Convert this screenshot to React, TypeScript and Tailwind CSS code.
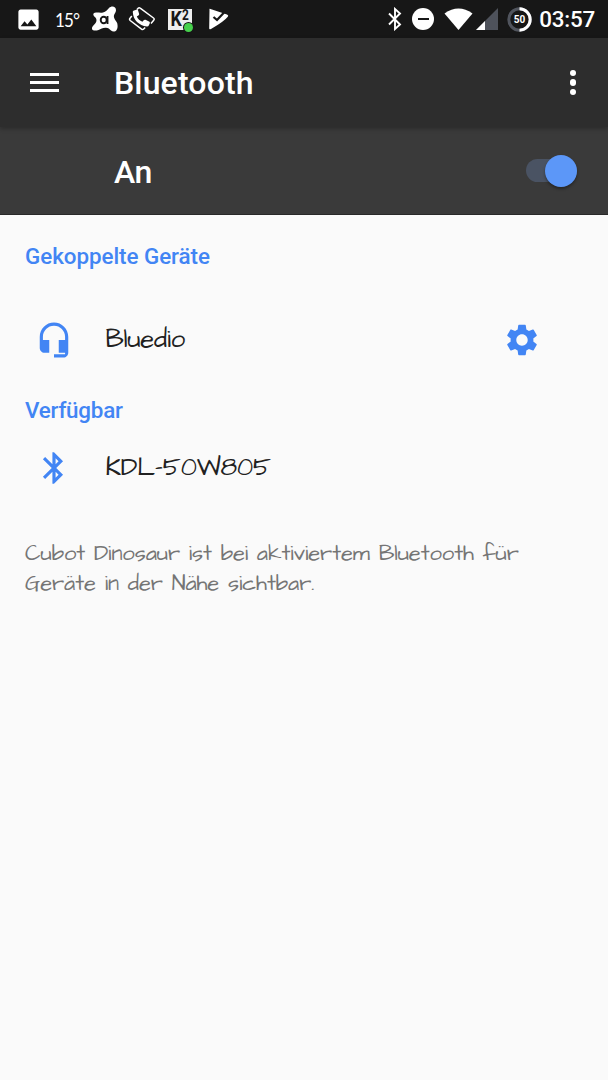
import type { ReactNode } from 'react';
import { MdBluetooth, MdImage, MdSettings } from 'react-icons/md';

interface SectionProps {
    title: string;
    className?: string;
}

interface DeviceProps {
    name: string;
    icon: ReactNode;
    action?: ReactNode;
    className?: string;
}

function AvastIcon() {
    return (
        <svg className="h-[27px] w-[27px]" viewBox="0 0 27 27">
            <path
                fill="#fff"
                d="M5 6.500c3 0 5 .5 7 0 3-.8 4-2.500 6-4.500 2-2 4.500-2 6-.5 1.500 1.700 1.200 4-.2 6-1 1.500-1.200 3-.5 4.700.7 2 2.600 3.400 3 5.300.5 2.800.5 4.500-.7 6.500-1.300 2-4 2-5.600.5-1.600-1.600-2.700-2.500-5-2.700-3-.3-5 1.300-7.500 2.200-2.800 1-6 .8-6.500-1-.5-2 1.500-3.500 3-5.200 1.500-1.800 1.800-3.300 1.200-5C4.500 10.800 2.500 10.500 2.300 8.700 2.200 7.200 3.500 6.500 5 6.500z"
            />
            <ellipse cx="12.700" cy="14" rx="3" ry="3.300" fill="none" stroke="#171717" strokeWidth="1.900" />
            <path d="M16.500 10v8" fill="none" stroke="#171717" strokeWidth="1.900" />
        </svg>
    );
}

function RotatePhoneIcon() {
    return (
        <svg className="h-[26px] w-[28px]" viewBox="0 0 28 26" fill="none">
            <path d="M9 3.500 10.200 2.200q1-.8 2 0L25.500 12q1.300 1 .2 2.200L23 17.500" stroke="#fff" strokeWidth="1.500" />
            <path d="M3.800 10 2 12.300q-1 1.200.2 2.200l11.300 8.700q1.200.8 2.200-.2l1.500-1.500" stroke="#fff" strokeWidth="1.500" />
            <path
                fill="#fff"
                d="M6 4.500 8.300 3.700c.9-.3 1.500.1 1.800.9l1 3.200c.2.800-.1 1.400-.8 1.800L8.800 10.600c1.100 2.400 3 4.200 5.600 5.200l1.300-1.600c.5-.6 1.100-.7 1.800-.4l3.500 1.600c.8.4 1 1 .8 1.800l-.9 2c-.4.900-1.100 1.300-2.100 1.200C11 19.500 5.200 14 4.800 6.200c0-.9.300-1.400 1.200-1.700z"
            />
        </svg>
    );
}

function PlayCheckIcon() {
    return (
        <svg className="h-[22px] w-[21px]" viewBox="0 0 21 22">
            <path fill="#fff" d="M1.500 1.500Q1 .5 2.500 1L19 6.500q2 .8.800 2.200-4 5-16.800 12.200Q1 22 1.200 20z" />
            <path d="m5.500 9 3.500 3 8-8.500" fill="none" stroke="#171717" strokeWidth="2.200" />
        </svg>
    );
}

function StatusBar() {
    return (
        <div className="flex h-[38px] items-center bg-[#171717] text-white">
            <MdImage className="ml-[15px] size-[27px] shrink-0" />
            <span className="ml-[13px] w-[26px] origin-left scale-x-[0.85] font-['Lato'] text-[20px] tracking-[-1px]">15°</span>
            <div className="ml-[10px]"><AvastIcon /></div>
            <div className="ml-[10px]"><RotatePhoneIcon /></div>
            <div className="relative ml-[12px] flex h-[21px] w-[24px] items-center justify-center bg-[#eee] font-['Roboto'] leading-none font-bold text-[#171717]">
                <span className="flex scale-x-[0.85] text-[21px] leading-none">
                    K<span className="-mt-px text-[14px] leading-none">2</span>
                </span>
                <span className="absolute -right-[1px] -bottom-[2px] size-[9px] rounded-full bg-[#46d14c] ring-1 ring-[#171717]" />
            </div>
            <div className="ml-[16px]"><PlayCheckIcon /></div>

            <div className="ml-auto flex items-center pr-[13px]">
                <svg className="h-[24px] w-[16px]" viewBox="0 0 16 24">
                    <path d="m2 6.500 11 11-5 4.500V2l5 4.500-11 11" fill="none" stroke="#fff" strokeWidth="1.900" />
                </svg>
                <div className="ml-[9px] flex size-[22px] items-center justify-center rounded-full bg-white">
                    <span className="h-[2px] w-[11px] bg-[#171717]" />
                </div>
                <svg className="ml-[10px] h-[22px] w-[29px]" viewBox="0 0 29 22">
                    <path fill="#fff" d="M.5 5.500Q14.500-4.500 28.500 5.500L14.500 22z" />
                </svg>
                <svg className="ml-[3px] h-[22px] w-[22px]" viewBox="0 0 22 22">
                    <path fill="#4e525b" d="M22 0v22H0z" />
                    <path fill="#fff" d="M9 13v9H0z" />
                </svg>
                <svg className="ml-[9px] size-[25px]" viewBox="0 0 25 25">
                    <circle cx="12.500" cy="12.500" r="10.700" fill="none" stroke="#50545d" strokeWidth="3" />
                    <path d="M12.500 1.800a10.700 10.700 0 0 1 0 21.400" fill="none" stroke="#fff" strokeWidth="3" />
                    <text x="12.500" y="16.200" textAnchor="middle" fill="#fff" fontFamily="Roboto" fontSize="10" fontWeight="700">50</text>
                </svg>
                <span className="ml-[7px] font-['Roboto'] text-[22.400px] leading-none font-medium tracking-[-0.200px]">03:57</span>
            </div>
        </div>
    );
}

function Toolbar() {
    return (
        <header className="relative flex h-[89px] items-center bg-[#2d2d2d] pr-[32px] pl-[30px] text-white shadow-[0_2px_4px_rgba(0,0,0,0.25)]">
            <div className="flex w-[29px] flex-col gap-[5px]">
                <span className="h-[3px] bg-white" />
                <span className="h-[3px] bg-white" />
                <span className="h-[3px] bg-white" />
            </div>
            <h1 className="ml-[55px] text-[32px] leading-none font-medium tracking-[0.150px]">Bluetooth</h1>
            <div className="ml-auto flex flex-col gap-[3px]">
                <span className="size-[6.500px] rounded-full bg-white" />
                <span className="size-[6.500px] rounded-full bg-white" />
                <span className="size-[6.500px] rounded-full bg-white" />
            </div>
        </header>
    );
}

function SwitchBar() {
    return (
        <div className="flex h-[88px] items-center justify-between border-b border-[#292929] bg-[#3a3a3a] pr-[31px] pl-[114px] text-white">
            <span className="pt-[2px] text-[32px] leading-none font-medium tracking-[-0.500px]">An</span>
            <div className="flex h-[23px] w-[51px] items-center justify-end rounded-full bg-[#4a5363]">
                <span className="size-[32px] rounded-full bg-[#5c97f8] shadow-[0_2px_3px_rgba(0,0,0,0.35)]" />
            </div>
        </div>
    );
}

function SectionTitle({ title, className = '' }: SectionProps) {
    return <h2 className={`text-[22.400px] leading-[26px] font-medium text-[#4285f4] ${className}`}>{title}</h2>;
}

function Device({ name, icon, action, className = '' }: DeviceProps) {
    return (
        <div className={`flex h-[38px] items-center pr-[42px] pl-[10px] text-[#4285f4] ${className}`}>
            {icon}
            <span className="ml-[32.500px] font-['Architects_Daughter','Lato',sans-serif] text-[25.600px] tracking-[-0.150px] text-[#212121]">{name}</span>
            {action && <div className="ml-auto">{action}</div>}
        </div>
    );
}

export default function App() {
    return (
        <div className="flex h-[1080px] w-[608px] flex-col overflow-hidden bg-[#fafafa] font-['Roboto',sans-serif]">
            <StatusBar />
            <Toolbar />
            <SwitchBar />
            <main className="px-[25px] pt-[28px]">
                <SectionTitle title="Gekoppelte Geräte" className="tracking-[-0.050px]" />
                <Device
                    className="mt-[52px]"
                    name="Bluedio"
                    icon={
                        <svg className="size-[38px] shrink-0" viewBox="0 0 24 24" fill="currentColor">
                            <path d="M12 1c-4.970 0-9 4.030-9 9v7c0 1.660 1.340 3 3 3h3v-8H5v-2c0-3.870 3.130-7 7-7s7 3.130 7 7v2h-4v8h4v1h-7v2h6c1.660 0 3-1.340 3-3V10c0-4.970-4.030-9-9-9z" />
                        </svg>
                    }
                    action={<MdSettings className="size-[38px]" />}
                />
                <SectionTitle title="Verfügbar" className="mt-[38px] tracking-[-0.220px]" />
                <Device
                    className="mt-[26px]"
                    name="KDL-50W805"
                    icon={<MdBluetooth className="size-[38px] shrink-0" />}
                />
                <p className="mt-[52px] font-['Architects_Daughter','Lato',sans-serif] text-[22px] leading-[30px] tracking-[-0.050px] text-[#757575]">
                    <span className="block whitespace-nowrap">Cubot Dinosaur ist bei aktiviertem Bluetooth für</span>
                    <span className="block whitespace-nowrap">Geräte in der Nähe sichtbar.</span>
                </p>
            </main>
        </div>
    );
}
